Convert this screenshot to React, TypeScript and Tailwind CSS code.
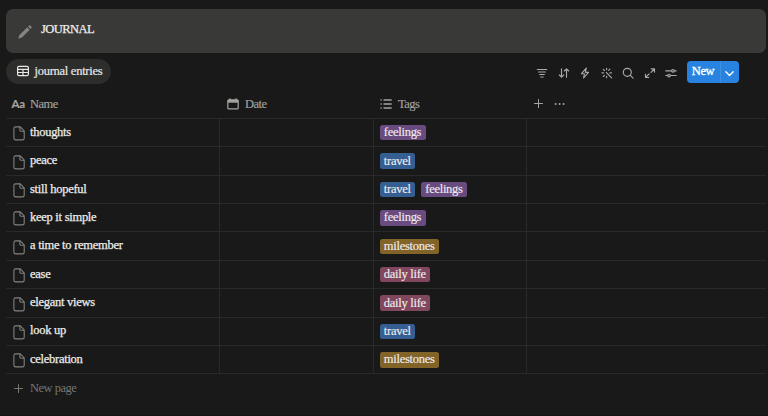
import type { ReactNode } from "react";
import clsx from "clsx";

type Tag = "feelings" | "travel" | "milestones" | "daily life";

interface Entry {
  name: string;
  tags: Tag[];
}

const TAG_COLORS: Record<Tag, string> = {
  feelings: "bg-[#6a4b80]",
  travel: "bg-[#355f92]",
  milestones: "bg-[#836428]",
  "daily life": "bg-[#81475f]",
};

const ENTRIES: Entry[] = [
  { name: "thoughts", tags: ["feelings"] },
  { name: "peace", tags: ["travel"] },
  { name: "still hopeful", tags: ["travel", "feelings"] },
  { name: "keep it simple", tags: ["feelings"] },
  { name: "a time to remember", tags: ["milestones"] },
  { name: "ease", tags: ["daily life"] },
  { name: "elegant views", tags: ["daily life"] },
  { name: "look up", tags: ["travel"] },
  { name: "celebration", tags: ["milestones"] },
];

const COLS = "grid grid-cols-[214.5px_153.5px_153.5px_1fr]";

function Icon({ children, className, width = 1.1 }: { children: ReactNode; className?: string; width?: number }) {
  return (
    <svg
      viewBox="0 0 12 12"
      fill="none"
      stroke="currentColor"
      strokeWidth={width}
      strokeLinecap="round"
      strokeLinejoin="round"
      className={clsx("shrink-0", className)}
    >
      {children}
    </svg>
  );
}

const TOOLBAR: { id: string; art: ReactNode }[] = [
  { id: "filter", art: <path d="M1.3 2.5h9.4M2.6 5h6.8M3.7 7.5h4.6M4.8 10h2.4" /> },
  { id: "sort", art: <path d="M3.5 1.8v8.4M1.3 8l2.2 2.2L5.7 8M8.5 10.2V1.8M6.3 4l2.2-2.2L10.7 4" /> },
  { id: "automations", art: <path d="M7.3 1.1 2.5 6.7h3l-.9 4.3 4.9-5.7H6.4z" /> },
  {
    id: "ai",
    art: (
      <path d="M5.2 5.4l5.4 5.4M5.6 1.2v1.5M2.3 2.4l1.1 1.1M1 5.9h1.5M2.3 9.5l1.1-1.1M5.6 9.2v1.5M8.9 2.2 7.7 3.4M8.9 5.9h1.5" />
    ),
  },
  {
    id: "search",
    art: (
      <>
        <circle cx="5.3" cy="5.3" r="4" />
        <path d="m8.3 8.3 2.8 2.8" />
      </>
    ),
  },
  { id: "expand", art: <path d="M7.2 1.8h3.3v3.3M10.3 2 7 5.3M4.8 10.5H1.5V7.2M1.7 10.3 5 7" /> },
  {
    id: "settings",
    art: (
      <>
        <path d="M.8 3.8h5.8M9.4 3.8h1.8M.8 8.5h1.8M5.4 8.5h5.8" />
        <circle cx="8" cy="3.8" r="1.3" />
        <circle cx="4" cy="8.5" r="1.3" />
      </>
    ),
  },
];

function PlusIcon({ className }: { className?: string }) {
  return (
    <Icon className={clsx("size-[11px]", className)}>
      <path d="M6 1.6v8.8M1.6 6h8.8" />
    </Icon>
  );
}

function PageIcon() {
  return (
    <svg viewBox="0 0 12 15" className="mt-[2.5px] h-[15px] w-3 shrink-0 text-[#81817f]" fill="none" stroke="currentColor" strokeWidth="1.1">
      <path d="M2.6.9h4.6l4 4v7.3a1.7 1.7 0 0 1-1.7 1.7H2.6a1.7 1.7 0 0 1-1.7-1.7V2.6A1.7 1.7 0 0 1 2.6.9z" />
      <path d="M6.9 1v3.3a.9.9 0 0 0 .9.9h3.3" />
    </svg>
  );
}

function TagChip({ tag }: { tag: Tag }) {
  return (
    <span
      className={clsx(
        "mt-[0.5px] flex h-[15.5px] items-center rounded-[2.5px] px-[4.3px] pb-px text-[#efecee] [-webkit-text-stroke:0.15px_currentColor]",
        TAG_COLORS[tag],
      )}
    >
      {tag}
    </span>
  );
}

export default function App() {
  return (
    <div className="h-[416px] w-[768px] overflow-hidden border-b border-[#161113] bg-[#191919] pt-[9px] pr-[2px] pl-[5.5px] font-['Liberation_Serif',serif] text-[12.5px] leading-4 tracking-[-0.27px] text-[#e8e8e6]">
      {/* Title banner */}
      <header className="flex h-11 items-center rounded-[7px] bg-[#393937] pl-3">
        <svg viewBox="0 0 14 14" className="mt-px size-[14px] text-[#858583]" fill="currentColor">
          <path d="M9.3 2.3 11.7 4.7 3.9 12.4.8 13.5a.3.3 0 0 1-.4-.4L1.5 10zM10.1 1.5l.8-.8a1.1 1.1 0 0 1 1.6 0l.8.8a1.1 1.1 0 0 1 0 1.6l-.8.8z" />
        </svg>
        <h1 className="-mt-1 ml-[9.5px] tracking-[-0.55px] text-[#efefed] [-webkit-text-stroke:0.25px_currentColor]">JOURNAL</h1>
      </header>

      {/* View tab and toolbar */}
      <div className="mt-[6px] flex h-[24.5px] items-center">
        <div className="flex h-full w-[105.5px] items-center rounded-full bg-[#2d2d2b] pl-[11px]">
          <Icon className="size-3" width={1.2}>
            <rect x=".6" y="1.4" width="10.8" height="9.2" rx="1.4" />
            <path d="M.6 4.4h10.8M.6 7.5h10.8M6 4.4v6.2" />
          </Icon>
          <span className="ml-[6px] whitespace-nowrap [-webkit-text-stroke:0.2px_currentColor]">journal entries</span>
        </div>

        <div className="mt-[3px] mr-[9.5px] ml-auto flex items-center gap-[9.5px] text-[#a9a9a6]">
          {TOOLBAR.map(({ id, art }) => (
            <Icon key={id} className="size-3" width={1.15}>
              {art}
            </Icon>
          ))}
        </div>

        <div className="mt-[2px] mr-[27px] flex h-[22px] w-[52.5px] overflow-hidden rounded-[4px] bg-[#2883e0] text-white">
          <div className="flex w-[34px] items-center justify-center border-r border-[#3f8fe2] pb-[2px] tracking-[-0.4px] [-webkit-text-stroke:0.3px_currentColor]">
            New
          </div>
          <div className="flex flex-1 items-center justify-center pt-[2px]">
            <Icon className="size-[11px]" width={1.5}>
              <path d="m2 4.2 4 4 4-4" />
            </Icon>
          </div>
        </div>
      </div>

      {/* Column headers */}
      <div className={clsx(COLS, "mt-[6.5px] h-[28.8px] border-b border-[#292929] text-[#a3a3a0] tracking-[-0.55px] [-webkit-text-stroke:0.15px_currentColor]")}>
        <div className="flex items-center pl-[6px]">
          <span className="mt-px w-[18.5px] font-[Lato,sans-serif] text-[11.5px] font-bold tracking-[-0.2px]">Aa</span>
          Name
        </div>
        <div className="flex items-center pl-[7px]">
          <svg viewBox="0 0 12 12" className="size-3" fill="none" stroke="currentColor" strokeWidth="1.2">
            <rect x=".8" y="1.9" width="10.4" height="9" rx="1" />
            <path d="M.8 3.3h10.4" strokeWidth="2.8" />
            <path d="M3 .3v2M9 .3v2" />
          </svg>
          <span className="ml-[6px]">Date</span>
        </div>
        <div className="flex items-center pl-[6.5px]">
          <Icon className="size-3" width={1.4}>
            <path d="M4 2h7.2M4 6h7.2M4 10h7.2M1 2h.2M1 6h.2M1 10h.2" />
          </Icon>
          <span className="ml-[6px]">Tags</span>
        </div>
        <div className="flex items-center gap-[10px] pl-[5.5px]">
          <PlusIcon />
          <Icon className="size-3" width={2}>
            <path d="M1.6 6h.01M5.6 6h.01M9.6 6h.01" />
          </Icon>
        </div>
      </div>

      {/* Entries */}
      {ENTRIES.map(({ name, tags }) => (
        <div key={name} className={clsx(COLS, "h-[28.4px] border-b border-[#292929]")}>
          <div className="flex items-center border-r border-[#292929] pl-[7px]">
            <PageIcon />
            <span className="-mt-[1.5px] ml-[5.5px] text-[#ededeb] [-webkit-text-stroke:0.25px_currentColor]">{name}</span>
          </div>
          <div className="border-r border-[#292929]" />
          <div className="flex items-center gap-[6px] border-r border-[#292929] pl-[6px]">
            {tags.map(tag => (
              <TagChip key={tag} tag={tag} />
            ))}
          </div>
        </div>
      ))}

      <div className="flex h-7 items-center pl-[7px] text-[#767674] tracking-[-0.5px]">
        <PlusIcon className="mt-px" />
        <span className="ml-[6.5px]">New page</span>
      </div>
    </div>
  );
}
